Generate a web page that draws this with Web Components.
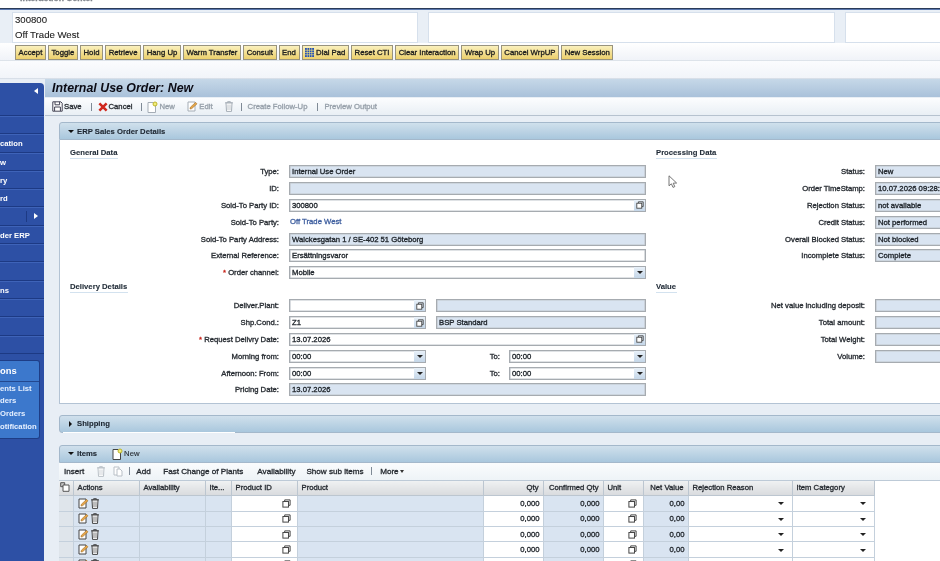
<!DOCTYPE html>
<html>
<head>
<meta charset="utf-8">
<title>Internal Use Order: New</title>
<style>
  html, body { margin: 0; padding: 0; width: 940px; height: 561px; overflow: hidden; background: #fff; }
  body { font-family: "Liberation Sans", Arial, sans-serif; font-size: 7.7px; color: #222; }
  #app { width: 940px; height: 561px; display: flex; flex-direction: column; overflow: hidden; filter: blur(.35px); -webkit-text-stroke: .32px; }
  .main { flex: 1; display: flex; min-height: 0; background: #e8eef5; }
  .content { flex: 1; min-width: 0; display: flex; flex-direction: column; }
</style>
</head>
<body>
<div id="app">
  <cti-bar>
    <cti-button>Accept</cti-button><cti-button>Toggle</cti-button><cti-button>Hold</cti-button><cti-button>Retrieve</cti-button><cti-button>Hang Up</cti-button><cti-button>Warm Transfer</cti-button><cti-button>Consult</cti-button><cti-button>End</cti-button><cti-button icon="grid">Dial Pad</cti-button><cti-button>Reset CTI</cti-button><cti-button>Clear Interaction</cti-button><cti-button>Wrap Up</cti-button><cti-button>Cancel WrpUP</cti-button><cti-button>New Session</cti-button>
  </cti-bar>
  <div class="main">
    <side-nav></side-nav>
    <div class="content">
      <page-head title-text="Internal Use Order: New">
        <tool-item icon="save" label="Save"></tool-item>
        <tool-sep style="margin:0 6px 0 9px"></tool-sep>
        <tool-item icon="cancel" label="Cancel"></tool-item>
        <tool-sep style="margin:0 5px 0 9px"></tool-sep>
        <tool-item icon="newdoc" label="New" off></tool-item>
        <tool-item icon="edit" label="Edit" off style="margin-left:12.5px"></tool-item>
        <tool-item icon="trash" off style="margin-left:11px"></tool-item>
        <tool-sep style="margin:0 6px 0 7px"></tool-sep>
        <tool-item label="Create Follow-Up" off></tool-item>
        <tool-sep style="margin:0 6px 0 10px"></tool-sep>
        <tool-item label="Preview Output" off></tool-item>
      </page-head>

      <tray-panel heading="ERP Sales Order Details" open style="margin-top:6px">
        <order-form></order-form>
      </tray-panel>

      <tray-panel heading="Shipping" style="margin-top:11px"></tray-panel>

      <tray-panel heading="Items" open flush style="margin-top:12px">
        <tool-item slot="head" icon="newdoc" label="New" style="margin-left:15px"></tool-item>
        <items-table></items-table>
      </tray-panel>
    </div>
  </div>
  <mouse-pointer></mouse-pointer>
</div>

<script>
const ICONS = {
  stack: '<svg width="10" height="10" viewBox="0 0 10 10" fill="none" stroke="#444" stroke-width="1.1"><path d="M3 2.5V1h6v6H7.5"/><rect x="1" y="2.8" width="6.2" height="6.2" fill="#fff"/></svg>',
  save: '<svg width="11" height="11" viewBox="0 0 11 11" fill="#fff" stroke="#445" stroke-width="1"><path d="M.8.8h8l1.4 1.4v8H.8z"/><path d="M3 .8v3h4.6v-3M2.6 10V6h5.8v4" fill="none"/></svg>',
  cancel: '<svg width="10" height="10" viewBox="0 0 11 11" fill="none" stroke="#d0281e" stroke-width="2.8"><path d="M1.5 1.5l8 8M9.5 1.5l-8 8"/></svg>',
  newdoc: '<svg width="11" height="12" viewBox="0 0 11 12"><path d="M1 1.5h5l2.5 2.5v7.5H1z" fill="#fff" stroke="currentColor"/><circle cx="8" cy="3" r="2" fill="#f2ee7a" stroke="#b7ad1e" stroke-width=".9"/></svg>',
  edit: '<svg width="11" height="11" viewBox="0 0 11 11"><path d="M1 1h7v9H1z" fill="#fff" stroke="currentColor"/><path d="M3 8l.4-1.8L8.6 1.4l1.4 1.4-5.2 4.8z" fill="#e8a74a" stroke="#a06a1c" stroke-width=".6"/></svg>',
  trash: '<svg width="10" height="11" viewBox="0 0 10 11" fill="#fff" stroke="currentColor"><path d="M1 1.8h8M3.6 1.6V.7h2.8v.9" fill="none"/><path d="M2 2l.5 8.4h5L8 2z"/><path d="M4 3.5v5.5M6 3.5v5.5" stroke-width=".7"/></svg>',
  copy: '<svg width="11" height="11" viewBox="0 0 11 11" fill="#fff" stroke="currentColor"><path d="M1 1h5v8H1z"/><path d="M4 3h3l2 2v5H4z"/></svg>',
  grid: '<svg width="9" height="9" viewBox="0 0 10 10"><rect width="10" height="10" fill="#2450b8"/><path d="M0 2.5h10M0 5h10M0 7.5h10M2.5 0v10M5 0v10M7.5 0v10" stroke="#f4e27a" stroke-width=".7"/></svg>',
  multi: '<svg width="10" height="10" viewBox="0 0 10 10" fill="#fff" stroke="#555"><path d="M.7.7h4v4h-4z" fill="#c8c8c8"/><path d="M3 3h6v6.3H3z"/></svg>'
};

function define(name, cls) { customElements.define(name, cls); }

// top area with the partner boxes and the yellow phone buttons
define('cti-bar', class extends HTMLElement {
  constructor() {
    super();
    this.attachShadow({ mode: 'open' }).innerHTML = `<style>
      :host { display: block; height: 79px; flex: none; }
      .app-title { height: 8px; overflow: hidden; background: #fff; padding-left: 20px; }
      .app-title span { display: block; margin-top: -7px; font-size: 8.6px; font-weight: bold; line-height: 10px; color: #7f848c; }
      .rule { height: 2px; background: #2b3b58; border-bottom: 1px solid #5a78b0; box-sizing: border-box; }
      .boxes { height: 33px; display: flex; gap: 10px; padding: 2px 0 0 12px; box-sizing: border-box; background: #e9eff6; }
      .box { flex: none; height: 31px; background: #fff; border: 1px solid #d6e0ec; box-sizing: border-box; font-size: 9.6px; line-height: 14.5px; padding: 0 2px; color: #222; -webkit-text-stroke: .1px; }
      .b1 { width: 406px; } .b2 { width: 407px; } .b3 { width: 100px; }
      .btns { height: 18px; display: flex; gap: 2px; padding: 2px 0 0 15px; box-sizing: border-box; background: linear-gradient(#fff, #f0f3f8); border-bottom: 1px solid #dde3ea; }
      .strip { height: 18px; background: linear-gradient(#fbfcfe, #f1f4f9); border-bottom: 1px solid #d8dfe8; box-sizing: border-box; }
    </style>
    <div class="app-title"><span>Interaction Center</span></div>
    <div class="rule"></div>
    <div class="boxes">
      <div class="box b1">300800<br>Off Trade West</div>
      <div class="box b2"></div>
      <div class="box b3"></div>
    </div>
    <div class="btns"><slot></slot></div>
    <div class="strip"></div>`;
  }
});

define('cti-button', class extends HTMLElement {
  connectedCallback() {
    if (this.shadowRoot) return;
    const ic = this.getAttribute('icon');
    this.attachShadow({ mode: 'open' }).innerHTML = `<style>
      :host { display: inline-flex; align-items: center; gap: 2px; height: 15px; padding: 0 2.6px; box-sizing: border-box; flex: none;
        border: 1px solid #98937e; background: linear-gradient(#faf0bd, #ecd06c); font: 7.75px "Liberation Sans", Arial, sans-serif; color: #1c1c1c; }
      svg { display: block; }
    </style>${ic ? ICONS[ic] : ''}<slot></slot>`;
  }
});

// left navigation, pushed partly outside the window like in the shot
define('side-nav', class extends HTMLElement {
  constructor() {
    super();
    const items = ['', 'cation', 'w', 'ry', 'rd', '>', 'der ERP', '', '', 'ns', '', '', ''];
    const rows = items.map(t => t === '>'
      ? '<div class="item more"><i></i><b></b></div>'
      : `<div class="item">${t}</div>`).join('');
    this.attachShadow({ mode: 'open' }).innerHTML = `<style>
      :host { display: block; width: 45px; flex: none; background: #e8eef5; padding-top: 4px; box-sizing: border-box; }
      .nav { height: 100%; width: 44px; background: #2d50a5; border-top-right-radius: 4px; box-sizing: border-box; color: #fff; font-weight: bold; -webkit-text-stroke: 0; }
      .top { height: 33px; position: relative; border-bottom: 1px solid #1d3a84; box-sizing: border-box; }
      .top::after { content: ""; position: absolute; right: 6px; top: 5px; border: 3px solid transparent; border-right: 4px solid #fff; border-left: 0; }
      .item { height: 18.3px; line-height: 17px; border-bottom: 1px solid #1d3a84; border-top: 1px solid #3e63b8; box-sizing: border-box; white-space: nowrap; overflow: hidden; }
      .more { position: relative; }
      .more i { position: absolute; left: 26px; top: 3px; height: 11px; border-left: 1px solid #1d3a84; }
      .more b { position: absolute; left: 34px; top: 5px; border: 3px solid transparent; border-left: 4px solid #fff; border-right: 0; }
      .group { width: 40px; margin-top: 6px; background: #3c78cc; border: 1px solid #1e3d86; border-left: 0; border-radius: 0 3px 3px 0; box-sizing: border-box; height: 79px; overflow: hidden; }
      .group h4 { margin: 0; height: 21px; line-height: 20px; font-size: 9.4px; border-bottom: 1px solid #23488f; box-sizing: border-box; }
      .group div { height: 12.6px; line-height: 12.6px; white-space: nowrap; color: #e6f0ff; }
      .group section { padding-top: 1px; }
    </style>
    <div class="nav">
      <div class="top"></div>
      ${rows}
      <div class="group">
        <h4>ons</h4>
        <section><div>ents List</div><div>ders</div><div>Orders</div><div>otification</div></section>
      </div>
    </div>`;
  }
});

define('page-head', class extends HTMLElement {
  connectedCallback() {
    if (this.shadowRoot) return;
    this.attachShadow({ mode: 'open' }).innerHTML = `<style>
      :host { display: block; flex: none; }
      h1 { margin: 0; height: 18px; padding-left: 7px; font: italic bold 12.4px/18px "Liberation Sans", Arial, sans-serif; color: #0b0b14; -webkit-text-stroke: 0;
        background: linear-gradient(#c6d8e8, #a9c1da); }
      .tools { height: 18px; display: flex; align-items: center; padding-left: 7px; background: linear-gradient(#fcfdfe, #e9eff5); border-bottom: 1px solid #b6c2cf; box-sizing: border-box; margin-top: 1px; }
    </style>
    <h1>${this.getAttribute('title-text')}</h1>
    <div class="tools"><slot></slot></div>`;
  }
});

define('tool-item', class extends HTMLElement {
  connectedCallback() {
    if (this.shadowRoot) return;
    const ic = this.getAttribute('icon'), label = this.getAttribute('label') || '';
    const off = this.hasAttribute('off');
    this.attachShadow({ mode: 'open' }).innerHTML = `<style>
      :host { display: inline-flex; align-items: center; gap: 1px; flex: none; white-space: nowrap; font-weight: normal; color: ${off ? '#97a0aa' : '#262b31'}; }
      svg { display: block; color: ${off ? '#a5adb6' : '#444'}; }
    </style>${ic ? ICONS[ic] : ''}${label ? `<span>${label}</span>` : ''}`;
  }
});

define('tool-sep', class extends HTMLElement {
  constructor() {
    super();
    this.attachShadow({ mode: 'open' }).innerHTML = `<style>
      :host { display: block; width: 1px; height: 8px; flex: none; background: #7f8a96; }
    </style>`;
  }
});

define('tray-panel', class extends HTMLElement {
  connectedCallback() {
    if (this.shadowRoot) return;
    const open = this.hasAttribute('open');
    this.attachShadow({ mode: 'open' }).innerHTML = `<style>
      :host { display: block; flex: none; margin-left: 14px; margin-right: -20px; }
      .head { position: relative; height: 18px; display: flex; align-items: center; padding-left: 8px; box-sizing: border-box; font-weight: bold; color: #1c2530; -webkit-text-stroke: .1px;
        background: linear-gradient(#d0e0ec, #a9c7dd); border: 1px solid #a4b8cb; border-radius: 3px 0 0 ${open ? '0' : '3px'}; }
      ${open ? '' : '.head::after { content: ""; position: absolute; left: 3px; bottom: -1px; width: 172px; height: 1px; background: #fff; }'}
      .tri { width: 0; height: 0; margin-right: 3px; border: 2.5px solid transparent; }
      .tri.down { border-top: 3.5px solid #111; border-bottom: 0; border-left-width: 3px; border-right-width: 3px; }
      .tri.right { border-left: 3.5px solid #111; border-right: 0; border-top-width: 3px; border-bottom-width: 3px; margin-left: 1px; margin-right: 5px; }
      .body { background: #fff; border: 1px solid #b3c3d4; border-top: 0; ${open ? '' : 'display: none;'} }
    </style>
    <div class="head"><span class="tri ${open ? 'down' : 'right'}"></span><span>${this.getAttribute('heading')}</span><slot name="head"></slot></div>
    <div class="body"><slot></slot></div>`;
  }
});

define('sap-field', class extends HTMLElement {
  connectedCallback() {
    if (this.shadowRoot) return;
    const kind = this.getAttribute('kind') || 'ro';
    const value = this.getAttribute('value') || '';
    const btn = kind === 'f4' ? ICONS.stack
      : kind === 'dd' ? '<span class="arrow"></span>' : '';
    if (kind === 'link') {
      this.attachShadow({ mode: 'open' }).innerHTML = `<style>
        :host { display: block; line-height: 16px; padding-left: 1px; color: #3f5f9f; font-weight: normal; }
      </style>${value}`;
      return;
    }
    this.attachShadow({ mode: 'open' }).innerHTML = `<style>
      :host { display: flex; height: 13px; box-sizing: border-box; margin-top: 2px; overflow: hidden;
        border: 1px solid #a6abb0; box-shadow: inset 0 0 0 .6px #c0c5cb;
        background: ${kind === 'ro' ? '#d9e4f1' : '#fff'}; color: #20262c; }
      .val { flex: 1; min-width: 0; padding-left: 2px; line-height: 11px; white-space: nowrap; overflow: hidden; }
      .btn { flex: none; width: 11px; display: flex; align-items: center; justify-content: center; background: linear-gradient(#e8f0f8, #c4d6e8); }
      .btn svg { width: 8px; height: 8px; }
      .arrow { border: 3px solid transparent; border-top: 3.5px solid #222; border-bottom: 0; }
    </style><div class="val">${value}</div>${btn ? `<div class="btn">${btn}</div>` : ''}`;
  }
});

// one row of the form, label on the left and fields on the right
define('form-row', class extends HTMLElement {
  connectedCallback() {
    if (this.shadowRoot) return;
    const req = this.hasAttribute('req') ? '<em>* </em>' : '';
    const cols = this.getAttribute('cols') || '1fr';
    this.attachShadow({ mode: 'open' }).innerHTML = `<style>
      :host { display: grid; grid-template-columns: 209px 1fr; column-gap: 10px; height: 16.8px; }
      label { text-align: right; line-height: 18.4px; white-space: nowrap; color: #262b31; }
      em { color: #c8261c; font-style: normal; }
      .f { display: grid; grid-template-columns: ${cols}; }
    </style><label>${req}${this.getAttribute('label')}</label><div class="f"><slot></slot></div>`;
  }
});

define('section-title', class extends HTMLElement {
  constructor() {
    super();
    this.attachShadow({ mode: 'open' }).innerHTML = `<style>
      :host { display: block; height: 12px; margin-bottom: 4.4px; }
      span { display: inline-block; height: 12px; line-height: 11px; box-sizing: border-box; border-bottom: 1px solid #d3e2ef; font-weight: bold; color: #1f2a36; padding-right: 1px; -webkit-text-stroke: .1px; }
    </style><span><slot></slot></span>`;
  }
});

define('order-form', class extends HTMLElement {
  constructor() {
    super();
    this.attachShadow({ mode: 'open' }).innerHTML = `<style>
      :host { display: grid; grid-template-columns: 576px 339px; column-gap: 10px; padding: 7px 0 4.6px 10px; }
      .plain { text-align: right; line-height: 18.4px; padding-right: 9px; color: #262b31; }
    </style>
    <div>
      <section-title>General Data</section-title>
      <form-row label="Type:"><sap-field value="Internal Use Order"></sap-field></form-row>
      <form-row label="ID:"><sap-field></sap-field></form-row>
      <form-row label="Sold-To Party ID:"><sap-field kind="f4" value="300800"></sap-field></form-row>
      <form-row label="Sold-To Party:"><sap-field kind="link" value="Off Trade West"></sap-field></form-row>
      <form-row label="Sold-To Party Address:"><sap-field value="Walckesgatan 1 / SE-402 51 Göteborg"></sap-field></form-row>
      <form-row label="External Reference:"><sap-field kind="in" value="Ersättningsvaror"></sap-field></form-row>
      <form-row label="Order channel:" req><sap-field kind="dd" value="Mobile"></sap-field></form-row>
      <section-title>Delivery Details</section-title>
      <form-row label="Deliver.Plant:" cols="137px 10px 1fr"><sap-field kind="f4"></sap-field><span></span><sap-field></sap-field></form-row>
      <form-row label="Shp.Cond.:" cols="137px 10px 1fr"><sap-field kind="f4" value="Z1"></sap-field><span></span><sap-field value="BSP Standard"></sap-field></form-row>
      <form-row label="Request Delivry Date:" req><sap-field kind="f4" value="13.07.2026"></sap-field></form-row>
      <form-row label="Morning from:" cols="137px 83px 1fr"><sap-field kind="dd" value="00:00"></sap-field><span class="plain">To:</span><sap-field kind="dd" value="00:00"></sap-field></form-row>
      <form-row label="Afternoon: From:" cols="137px 83px 1fr"><sap-field kind="dd" value="00:00"></sap-field><span class="plain">To:</span><sap-field kind="dd" value="00:00"></sap-field></form-row>
      <form-row label="Pricing Date:"><sap-field value="13.07.2026"></sap-field></form-row>
    </div>
    <div>
      <section-title>Processing Data</section-title>
      <form-row label="Status:"><sap-field value="New"></sap-field></form-row>
      <form-row label="Order TimeStamp:"><sap-field value="10.07.2026 09:28:31"></sap-field></form-row>
      <form-row label="Rejection Status:"><sap-field value="not available"></sap-field></form-row>
      <form-row label="Credit Status:"><sap-field value="Not performed"></sap-field></form-row>
      <form-row label="Overall Blocked Status:"><sap-field value="Not blocked"></sap-field></form-row>
      <form-row label="Incomplete Status:"><sap-field value="Complete"></sap-field></form-row>
      <form-row label=""></form-row>
      <section-title>Value</section-title>
      <form-row label="Net value including deposit:"><sap-field></sap-field></form-row>
      <form-row label="Total amount:"><sap-field></sap-field></form-row>
      <form-row label="Total Weight:"><sap-field></sap-field></form-row>
      <form-row label="Volume:"><sap-field></sap-field></form-row>
    </div>`;
  }
});

define('items-table', class extends HTMLElement {
  constructor() {
    super();
    const cols = [
      ['', 14], ['Actions', 66], ['Availability', 66], ['Ite...', 26], ['Product ID', 66], ['Product', 186],
      ['Qty', 60, 'r'], ['Confirmed Qty', 60, 'r'], ['Unit', 40], ['Net Value', 45, 'r'], ['Rejection Reason', 104], ['Item Category', 82]
    ];
    const row = `<tr>
      <td class="sel"></td>
      <td class="ro act">${ICONS.edit}${ICONS.trash}</td>
      <td class="ro"></td><td class="ro"></td>
      <td class="ic">${ICONS.stack}</td>
      <td class="ro"></td>
      <td class="r">0,000</td>
      <td class="ro r">0,000</td>
      <td class="ic">${ICONS.stack}</td>
      <td class="ro r">0,00</td>
      <td class="ic dd"><i></i></td>
      <td class="ic dd"><i></i></td>
    </tr>`;
    this.attachShadow({ mode: 'open' }).innerHTML = `<style>
      :host { display: block; background: #fff; margin-left: -1px; }
      .bar { height: 18px; display: flex; align-items: center; padding-left: 5px; box-sizing: border-box; background: linear-gradient(#fafcfd, #eef3f7); border-bottom: 1px solid #bdcad7; font-size: 8.1px; color: #262b31; }
      .bar > * { flex: none; }
      table { border-collapse: collapse; table-layout: fixed; width: 815px; color: #262b31; }
      th { height: 15px; padding: 0 4px; box-sizing: border-box; text-align: left; white-space: nowrap; overflow: hidden; font-weight: normal;
        background: linear-gradient(#eff1f2, #d9dbde); border-right: 1px solid #bcc6d0; border-bottom: 1px solid #bcc6d0; }
      th:first-child { padding: 0 0 0 1px; }
      td { height: 15.4px; padding: 0 3px; box-sizing: border-box; background: #fff; border-right: 1px solid #c4d0dc; border-bottom: 1px solid #c4d0dc; }
      .ro { background: #d9e4f1; }
      .sel { background: #dfe5eb; }
      .r, th.r { text-align: right; }
      .act { padding-left: 4px; }
      .act svg { vertical-align: middle; color: #444; margin-right: 1px; }
      .ic svg { display: block; margin-left: auto; margin-right: 3px; width: 9px; height: 9px; }
      .dd { text-align: right; padding-right: 8px; }
      .dd i { display: inline-block; vertical-align: middle; border: 3px solid transparent; border-top: 3px solid #222; border-bottom: 0; border-left-width: 3.5px; border-right-width: 3.5px; }
    </style>
    <div class="bar">
      <span>Insert</span>
      <span style="margin-left:12px;color:#b9c0c7;display:flex">${ICONS.trash}</span>
      <span style="margin-left:7px;color:#b9c0c7;display:flex">${ICONS.copy}</span>
      <tool-sep style="margin:0 6px 0 5px"></tool-sep>
      <span>Add</span>
      <span style="margin-left:12.6px">Fast Change of Plants</span>
      <span style="margin-left:14px">Availability</span>
      <span style="margin-left:11px">Show sub items</span>
      <tool-sep style="margin:0 8px 0 7.6px"></tool-sep>
      <span>More</span><span style="margin-left:1px;border:2px solid transparent;border-top:3px solid #333;border-bottom:0"></span>
    </div>
    <table>
      <colgroup>${cols.map(c => `<col style="width:${c[1]}px">`).join('')}</colgroup>
      <thead><tr>${cols.map((c, i) => `<th class="${c[2] || ''}">${i === 0 ? ICONS.multi : c[0]}</th>`).join('')}</tr></thead>
      <tbody>${row.repeat(5)}</tbody>
    </table>`;
  }
});

// mouse pointer caught in the screenshot, sits over the form
define('mouse-pointer', class extends HTMLElement {
  constructor() {
    super();
    this.attachShadow({ mode: 'open' }).innerHTML = `<style>
      :host { position: absolute; left: 668px; top: 175px; width: 11px; height: 14px; }
    </style><svg width="11" height="14" viewBox="0 0 11 14"><path d="M1 .8v10l2.4-2 1.6 3.6 1.8-.8L5.2 8.2l3.4-.2z" fill="#fff" stroke="#666" stroke-width=".9"/></svg>`;
  }
});
</script>
</body>
</html>
